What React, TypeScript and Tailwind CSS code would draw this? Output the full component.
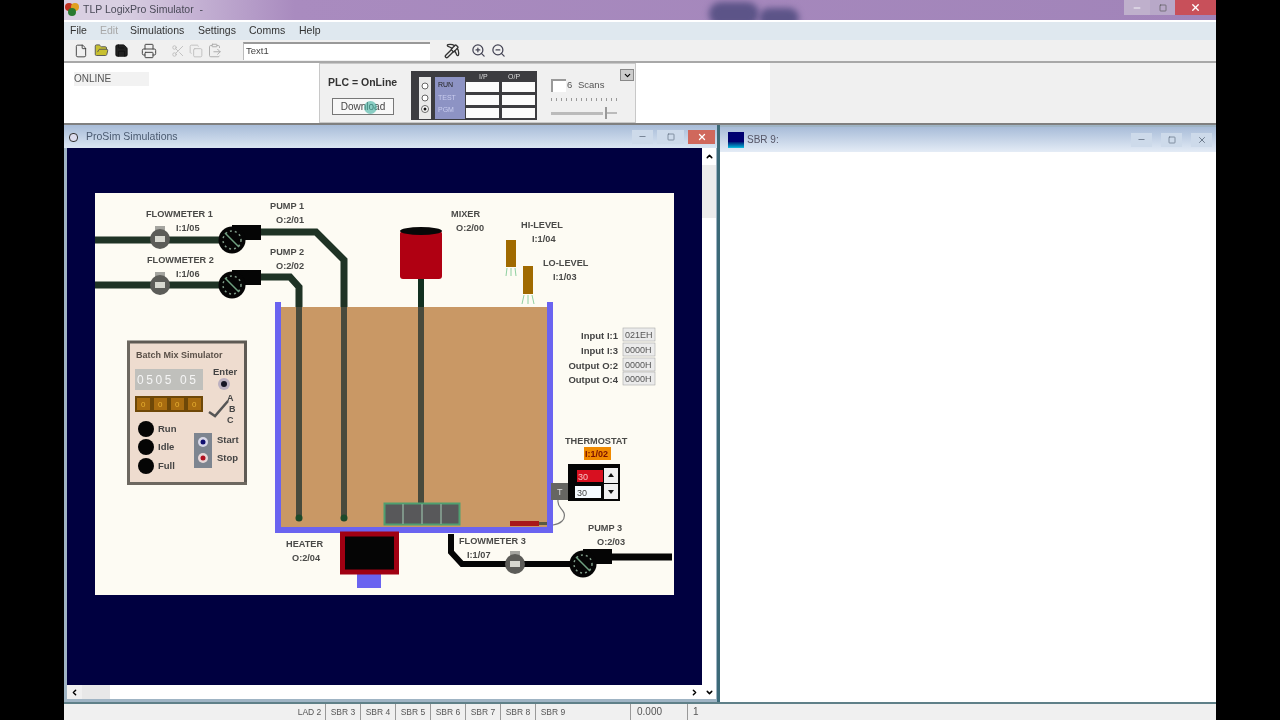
import { File, FolderOpen, Save, Printer, Scissors, Copy, ClipboardPaste, Pickaxe, ZoomIn, ZoomOut, Minus, Square, X, ChevronUp, ChevronDown, ChevronLeft, ChevronRight } from "lucide-react";

const font = "font-['Liberation_Sans',Arial,sans-serif]";
const labels: [string, number, number][] = [
  ["FLOWMETER 1", 146, 217], ["I:1/05", 176, 231], ["PUMP 1", 270, 209], ["O:2/01", 276, 223],
  ["FLOWMETER 2", 147, 263], ["I:1/06", 176, 277], ["PUMP 2", 270, 255], ["O:2/02", 276, 269],
  ["MIXER", 451, 217], ["O:2/00", 456, 231], ["HI-LEVEL", 521, 228], ["I:1/04", 532, 242],
  ["LO-LEVEL", 543, 266], ["I:1/03", 553, 280], ["HEATER", 286, 547], ["O:2/04", 292, 561],
  ["FLOWMETER 3", 459, 544], ["I:1/07", 467, 558], ["PUMP 3", 588, 531], ["O:2/03", 597, 545],
  ["THERMOSTAT", 565, 444],
];
const ioRows: [string, string, number][] = [
  ["Input I:1", "021EH", 328], ["Input I:3", "0000H", 343], ["Output O:2", "0000H", 358], ["Output O:4", "0000H", 372],
];
const tabs = ["SBR 3", "SBR 4", "SBR 5", "SBR 6", "SBR 7", "SBR 8", "SBR 9"];

function Pump({ x, y }: { x: number; y: number }) {
  return (
    <g>
      <rect x={x} y={y - 15} width={29} height={15} fill="#050505" />
      <circle cx={x} cy={y} r={13.5} fill="#050505" />
      <circle cx={x} cy={y} r={9} fill="none" stroke="#7f9a88" strokeWidth={1.5} strokeDasharray="2 3" />
      <line x1={x - 7} y1={y - 7} x2={x + 7} y2={y + 7} stroke="#6fa080" strokeWidth={1.5} />
    </g>
  );
}

function Flowmeter({ x, y }: { x: number; y: number }) {
  return (
    <g>
      <rect x={x - 5} y={y - 13} width={10} height={8} fill="#a5a5a0" />
      <circle cx={x} cy={y} r={10} fill="#5c5c58" />
      <rect x={x - 5} y={y - 3} width={10} height={6} fill="#d8d8d0" />
    </g>
  );
}

function Diagram() {
  return (
    <svg width={579} height={402} viewBox="95 193 579 402" className="block" fontFamily="'Liberation Sans', Arial, sans-serif">
      <rect x={95} y={193} width={579} height={402} fill="#fdfbf3" />

      {/* tank */}
      <rect x={281} y={307} width={266} height={220} fill="#c99865" />
      <path d="M278 302V530H550V302" fill="none" stroke="#6a63f0" strokeWidth={6} />

      {/* inlet pipes */}
      <path d="M95 240H225" stroke="#1f3325" strokeWidth={7} fill="none" />
      <path d="M95 285H225" stroke="#1f3325" strokeWidth={7} fill="none" />
      <path d="M258 232H316L344 260V307" stroke="#1f3325" strokeWidth={7} fill="none" />
      <path d="M258 277H290L299 287V307" stroke="#1f3325" strokeWidth={7} fill="none" />
      <path d="M299 307V516M344 307V516" stroke="#484a3c" strokeWidth={6} fill="none" />
      <circle cx={299} cy={518} r={3.5} fill="#1c4a2a" />
      <circle cx={344} cy={518} r={3.5} fill="#1c4a2a" />
      <Flowmeter x={160} y={239} />
      <Flowmeter x={160} y={285} />
      <Pump x={232} y={240} />
      <Pump x={232} y={285} />

      {/* mixer */}
      <rect x={400} y={231} width={42} height={48} rx={3} fill="#b00012" />
      <ellipse cx={421} cy={231} rx={21} ry={4} fill="#080808" />
      <rect x={418} y={279} width={6} height={28} fill="#123020" />
      <rect x={418} y={307} width={6} height={200} fill="#484a3c" />
      <rect x={384.5} y={503.5} width={75} height={21} fill="#58585a" stroke="#4f9f70" strokeWidth={2} />
      <path d="M403 504V524M422 504V524M441 504V524" stroke="#8aa898" strokeWidth={1.5} />

      {/* level sensors */}
      <rect x={506} y={240} width={10} height={27} fill="#a06a00" />
      <path d="M507 268L506 276M511 268V276M515 268L516 276" stroke="#8fd0a0" strokeWidth={1} />
      <rect x={523} y={266} width={10} height={28} fill="#a06a00" />
      <path d="M524 295L522 304M528 295V304M532 295L534 304" stroke="#8fd0a0" strokeWidth={1} />

      {/* heater */}
      <rect x={357} y={572} width={24} height={16} fill="#6a63f0" />
      <rect x={342.5} y={534} width={54} height={38} fill="#050505" stroke="#a00012" strokeWidth={5} />
      <rect x={510} y={521} width={29} height={5} fill="#a81818" />
      <rect x={539} y={522} width={8} height={3} fill="#5a5a40" />
      <path d="M553 525C560 524 566 520 564 513C562 508 557 507 558 500" stroke="#777" strokeWidth={1.2} fill="none" />

      {/* outlet */}
      <path d="M451 534V552L462 564H570" stroke="#050505" strokeWidth={6} fill="none" />
      <path d="M605 557H672" stroke="#050505" strokeWidth={7} fill="none" />
      <Flowmeter x={515} y={564} />
      <Pump x={583} y={564} />

      {/* thermostat */}
      <rect x={584} y={447} width={27} height={13} fill="#f08a00" />
      <text x={585} y={457} fontSize={9} fontWeight={700} fill="#7a1000">I:1/02</text>
      <rect x={551} y={483} width={18} height={17} fill="#666662" />
      <text x={557} y={495} fontSize={9} fill="#ddd">T</text>
      <rect x={568} y={464} width={52} height={37} fill="#050505" />
      <rect x={577} y={470} width={26} height={12} fill="#d81020" />
      <text x={578} y={480} fontSize={9} fill="#f5c0c0">30</text>
      <rect x={575} y={486} width={26} height={12} fill="#f5fbff" />
      <text x={577} y={496} fontSize={9} fill="#444">30</text>
      <rect x={604} y={468} width={14} height={15} fill="#f0f0f0" />
      <rect x={604} y={484} width={14} height={15} fill="#f0f0f0" />
      <path d="M608 477L611 473L614 477ZM608 490L611 494L614 490Z" fill="#111" />

      {/* io table */}
      {ioRows.map(([name, value, y]) => (
        <g key={name}>
          <text x={618} y={y + 11} textAnchor="end" fontSize={9.5} fontWeight={700} fill="#444">{name}</text>
          <rect x={623} y={y} width={32} height={13} fill="#ebebeb" stroke="#aaa" strokeWidth={0.6} />
          <text x={625} y={y + 10} fontSize={9} fill="#555">{value}</text>
        </g>
      ))}

      {/* batch panel */}
      <rect x={129} y={343} width={116} height={140} fill="#eedccf" />
      <path d="M127 342H245.500V484" stroke="#5e5a54" strokeWidth={3} fill="none" />
      <path d="M128.500 341V483.500H247" stroke="#6d6860" strokeWidth={3} fill="none" />
      <text x={136} y={358} fontSize={9} fontWeight={700} fill="#5a5048">Batch Mix Simulator</text>
      <rect x={135} y={369} width={68} height={21} fill="#c0c0bc" />
      <text x={137} y={384} fontSize={12} letterSpacing={2.6} fill="#f5f5f5">0505 05</text>
      <rect x={135} y={396} width={68} height={16} fill="#6e4808" />
      {[137, 154, 171, 188].map(x => (
        <g key={x}>
          <rect x={x} y={398} width={13} height={12} fill="#a86c10" />
          <text x={x + 4} y={407} fontSize={8} fill="#e8b030">0</text>
        </g>
      ))}
      <text x={213} y={375} fontSize={9.5} fontWeight={700} fill="#444">Enter</text>
      <circle cx={224} cy={384} r={6} fill="#bbb0c0" />
      <circle cx={224} cy={384} r={3} fill="#151525" />
      <path d="M209 412L215 416L228 401" stroke="#555" strokeWidth={2.5} fill="none" />
      <text x={227} y={401} fontSize={9} fontWeight={700} fill="#444">A</text>
      <text x={229} y={412} fontSize={9} fontWeight={700} fill="#444">B</text>
      <text x={227} y={423} fontSize={9} fontWeight={700} fill="#444">C</text>
      {([["Run", 429], ["Idle", 447], ["Full", 466]] as [string, number][]).map(([name, y]) => (
        <g key={name}>
          <circle cx={146} cy={y} r={8} fill="#050505" />
          <text x={158} y={y + 3} fontSize={9.5} fontWeight={700} fill="#444">{name}</text>
        </g>
      ))}
      <rect x={194} y={433} width={18} height={35} fill="#7d8590" />
      <circle cx={203} cy={442} r={5} fill="#d8d8e8" />
      <circle cx={203} cy={442} r={2.5} fill="#101070" />
      <circle cx={203} cy={458} r={5} fill="#e8d8d8" />
      <circle cx={203} cy={458} r={2.5} fill="#b01020" />
      <text x={217} y={443} fontSize={9.5} fontWeight={700} fill="#444">Start</text>
      <text x={217} y={461} fontSize={9.5} fontWeight={700} fill="#444">Stop</text>

      {labels.map(([text, x, y]) => (
        <text key={text} x={x} y={y} fontSize={9.2} fontWeight={700} fill="#4a4a48">{text}</text>
      ))}
    </svg>
  );
}

function ModeTable() {
  return (
    <svg width={126} height={49} viewBox="0 0 126 49" className="block" fontFamily="'Liberation Sans', Arial, sans-serif">
      <rect width={126} height={49} fill="#3c3c40" />
      <rect x={8} y={6} width={12} height={42} fill="#e8e8e8" />
      <circle cx={14} cy={15} r={3} fill="#fff" stroke="#666" />
      <circle cx={14} cy={27} r={3} fill="#fff" stroke="#666" />
      <circle cx={14} cy={38} r={3.5} fill="#fff" stroke="#666" />
      <circle cx={14} cy={38} r={1.5} fill="#111" />
      <rect x={24} y={6} width={30} height={42} fill="#8d93c4" />
      <text x={27} y={16} fontSize={7} fill="#222">RUN</text>
      <text x={27} y={29} fontSize={7} fill="#c8ccee">TEST</text>
      <text x={27} y={41} fontSize={7} fill="#c8ccee">PGM</text>
      <text x={68} y={8} fontSize={7} fill="#ddd">I/P</text>
      <text x={97} y={8} fontSize={7} fill="#ddd">O/P</text>
      {[11, 24, 37].map(y => (
        <g key={y}>
          <rect x={55} y={y} width={33} height={10} fill="#fbfbfb" />
          <rect x={91} y={y} width={33} height={10} fill="#fbfbfb" />
        </g>
      ))}
    </svg>
  );
}

function WinButton({ close, wide, children }: { close?: boolean; wide?: boolean; children: React.ReactNode }) {
  return (
    <div className={`flex h-[14px] items-center justify-center ${wide ? "w-[27px]" : "w-[21px]"} ${close ? "bg-[#d0685c] text-white" : "bg-[#cddaea] text-[#5c6a7c]"}`}>
      {children}
    </div>
  );
}

export default function App() {
  return (
    <div className={`h-[720px] w-[1280px] overflow-hidden bg-black px-16 blur-[0.7px] ${font}`}>
      <div className="flex h-full flex-col bg-[#f0f0f0]">
        {/* title bar */}
        <div className="relative flex h-5 shrink-0 items-start justify-between overflow-hidden bg-gradient-to-r from-[#d9cfe2] from-5% via-[#a98bbf] via-20% to-[#a184b9]">
          <div className="absolute left-[645px] top-[2px] h-[24px] w-[50px] rounded-full bg-[#5c5488] blur-[3px]" />
          <div className="absolute left-[695px] top-[8px] h-[20px] w-[40px] rounded-full bg-[#5c5488] blur-[3px]" />
          <div className="relative flex items-center gap-[3px]">
            <svg width={16} height={16} viewBox="0 0 16 16">
              <circle cx={5} cy={6} r={4} fill="#c03020" />
              <circle cx={11} cy={6} r={4} fill="#e0a020" />
              <circle cx={8} cy={11} r={4} fill="#2a7a30" />
            </svg>
            <span className="pt-[2px] text-[10.5px] text-[#4a4a58]">TLP LogixPro Simulator&nbsp; -</span>
          </div>
          <div className="relative flex h-[15px] items-center">
            <div className="flex h-full w-[26px] items-center justify-center bg-[#bfb0cc] text-white"><Minus size={10} /></div>
            <div className="flex h-full w-[25px] items-center justify-center bg-[#b8a8c8] text-[#555]"><Square size={8} /></div>
            <div className="flex h-full w-[41px] items-center justify-center bg-[#c8505a] text-white"><X size={11} strokeWidth={3} /></div>
          </div>
        </div>

        {/* menu */}
        <div className="flex h-5 shrink-0 items-center border-t-2 border-white bg-[#dfe8ef] pl-[6px] text-[10.5px] text-[#333]">
          <span className="w-[30px]">File</span>
          <span className="w-[30px] text-[#a8a8a8]">Edit</span>
          <span className="w-[68px]">Simulations</span>
          <span className="w-[51px]">Settings</span>
          <span className="w-[50px]">Comms</span>
          <span>Help</span>
        </div>

        {/* toolbar */}
        <div className="flex h-[23px] shrink-0 items-center border-b-2 border-[#a8a8a8] pl-[10px] text-[#333]">
          <File size={14} strokeWidth={1.5} className="mr-[6px]" />
          <FolderOpen size={15} strokeWidth={1.5} className="mr-[5px] fill-[#c8c030] text-[#555]" />
          <Save size={15} strokeWidth={1.5} className="mr-[12px] fill-[#222] text-[#111]" />
          <Printer size={16} strokeWidth={1.5} className="mr-[14px] text-[#444]" />
          <Scissors size={14} strokeWidth={1.5} className="mr-[4px] text-[#bbb]" />
          <Copy size={14} strokeWidth={1.5} className="mr-[4px] text-[#bbb]" />
          <ClipboardPaste size={15} strokeWidth={1.5} className="mr-[21px] text-[#aaa]" />
          <div className="flex h-[18px] w-[187px] items-center border-t-2 border-l border-t-[#999] border-l-[#bbb] bg-white pl-[2px] text-[9.5px] text-[#444]">Text1</div>
          <Pickaxe size={16} strokeWidth={2} className="ml-[14px] mr-[11px] text-[#333]" />
          <ZoomIn size={15} strokeWidth={2} className="mr-[5px] text-[#445]" />
          <ZoomOut size={15} strokeWidth={2} className="text-[#445]" />
        </div>

        {/* online row */}
        <div className="flex h-[62px] shrink-0 border-b-2 border-[#808080]">
          <div className="w-[255px] bg-white pl-[10px] pt-[9px]">
            <div className="h-[14px] w-[75px] bg-[#f2f2f2] text-[10px] leading-[14px] text-[#555]">ONLINE</div>
          </div>
          <div className="relative flex w-[317px] border border-[#c8c8c8] bg-[#f0f0f0] pl-[8px] pt-[7px]">
            <div className="w-[83px]">
              <div className="mt-[4px] text-[10.5px] font-bold text-[#333]">PLC = OnLine</div>
              <div className="relative ml-[4px] mt-[7px] flex h-[17px] w-[62px] items-center justify-center border border-[#777] bg-[#f8f8f8] text-[10px] text-[#444]">
                Download
                <div className="absolute left-[31px] top-[2px] size-[13px] rounded-full bg-[#40b0a0]/60" />
              </div>
            </div>
            <ModeTable />
            <div className="ml-[14px] w-[72px]">
              <div className="mt-[7px] flex items-center text-[9.5px] text-[#555]">
                <div className="h-[13px] w-[15px] border-t-2 border-l-2 border-[#999] bg-white" />
                <span className="ml-[1px] w-[11px]">6</span>
                <span>Scans</span>
              </div>
              <div className="mt-[6px] h-[3px] w-[66px] bg-[repeating-linear-gradient(90deg,#999_0,#999_1px,transparent_1px,transparent_5px)]" />
              <div className="mt-[6px] flex items-center">
                <div className="h-[3px] w-[52px] bg-[#bbb]" />
                <div className="ml-[2px] h-[12px] w-[2px] bg-[#999]" />
                <div className="h-[2px] w-[10px] bg-[#bbb]" />
              </div>
            </div>
            <div className="absolute right-[1px] top-[5px] flex h-[12px] w-[14px] items-center justify-center border border-[#888] bg-[#ccc]"><ChevronDown size={9} strokeWidth={3} /></div>
          </div>
          <div className="w-[134px] bg-white" />
          <div className="flex-1 bg-[#f0f0f0]" />
        </div>

        {/* mdi area */}
        <div className="flex min-h-0 flex-1 bg-[#9fb4c4]">
          <div className="flex w-[653px] flex-col">
            <div className="flex h-[23px] shrink-0 items-center justify-between bg-gradient-to-b from-[#a8bcd8] to-[#dbe6f3] pl-[5px] pr-[2px]">
              <div className="flex items-center gap-[8px] pt-[1px] text-[10.5px] text-[#4a5a70]">
                <div className="size-[9px] rounded-sm border border-[#333] bg-[#dde]" />
                <span>ProSim Simulations</span>
              </div>
              <div className="flex items-center gap-[4px]">
                <WinButton><Minus size={9} /></WinButton>
                <WinButton wide><Square size={8} /></WinButton>
                <WinButton wide close><X size={10} strokeWidth={3} /></WinButton>
              </div>
            </div>
            <div className="flex min-h-0 flex-1 pb-[3px] pl-[3px] pr-px">
              <div className="flex min-w-0 flex-1 flex-col">
                <div className="min-h-0 flex-1 bg-[#000040] pl-[28px] pt-[45px]">
                  <Diagram />
                </div>
                <div className="flex h-[14px] shrink-0 items-center justify-between bg-white">
                  <div className="flex h-full items-center">
                    <div className="flex h-full w-[15px] items-center justify-center bg-[#f0f0f0]"><ChevronLeft size={9} strokeWidth={4} /></div>
                    <div className="h-full w-[28px] bg-[#e8e8e8]" />
                  </div>
                  <div className="flex h-full w-[15px] items-center justify-center"><ChevronRight size={9} strokeWidth={4} /></div>
                </div>
              </div>
              <div className="flex w-[14px] shrink-0 flex-col justify-between bg-white">
                <div>
                  <div className="flex h-[17px] items-center justify-center"><ChevronUp size={9} strokeWidth={4} /></div>
                  <div className="h-[53px] bg-[#ececec]" />
                </div>
                <div className="flex h-[14px] items-center justify-center"><ChevronDown size={9} strokeWidth={4} /></div>
              </div>
            </div>
          </div>
          <div className="w-[3px] bg-[#3c6a78]" />
          <div className="flex flex-1 flex-col pt-[2px]">
            <div className="flex h-[25px] shrink-0 items-center justify-between bg-gradient-to-b from-[#a8bcd8] to-[#e4ecf6] pl-[8px] pr-[4px]">
              <div className="flex items-center gap-[3px] text-[10px] text-[#556]">
                <div className="h-[16px] w-[16px] bg-gradient-to-b from-[#000070] from-60% to-[#20c0e0]" />
                <span>SBR 9:</span>
              </div>
              <div className="flex items-center gap-[9px]">
                <WinButton><Minus size={9} /></WinButton>
                <WinButton><Square size={8} /></WinButton>
                <WinButton><X size={10} /></WinButton>
              </div>
            </div>
            <div className="min-h-0 flex-1 bg-white" />
          </div>
        </div>

        {/* status bar */}
        <div className="flex h-[18px] shrink-0 items-center border-t-2 border-[#5f8088] text-[8.5px] text-[#555]">
          <div className="ml-[230px] w-[31px] text-center">LAD 2</div>
          {tabs.map(t => (
            <div key={t} className="flex h-full w-[35px] items-center justify-center border-l border-[#999]">{t}</div>
          ))}
          <div className="ml-[60px] flex h-full w-[58px] items-start border-x border-[#999] pl-[6px] text-[10px]">0.000</div>
          <div className="self-start pl-[5px] text-[10px]">1</div>
        </div>
      </div>
    </div>
  );
}
